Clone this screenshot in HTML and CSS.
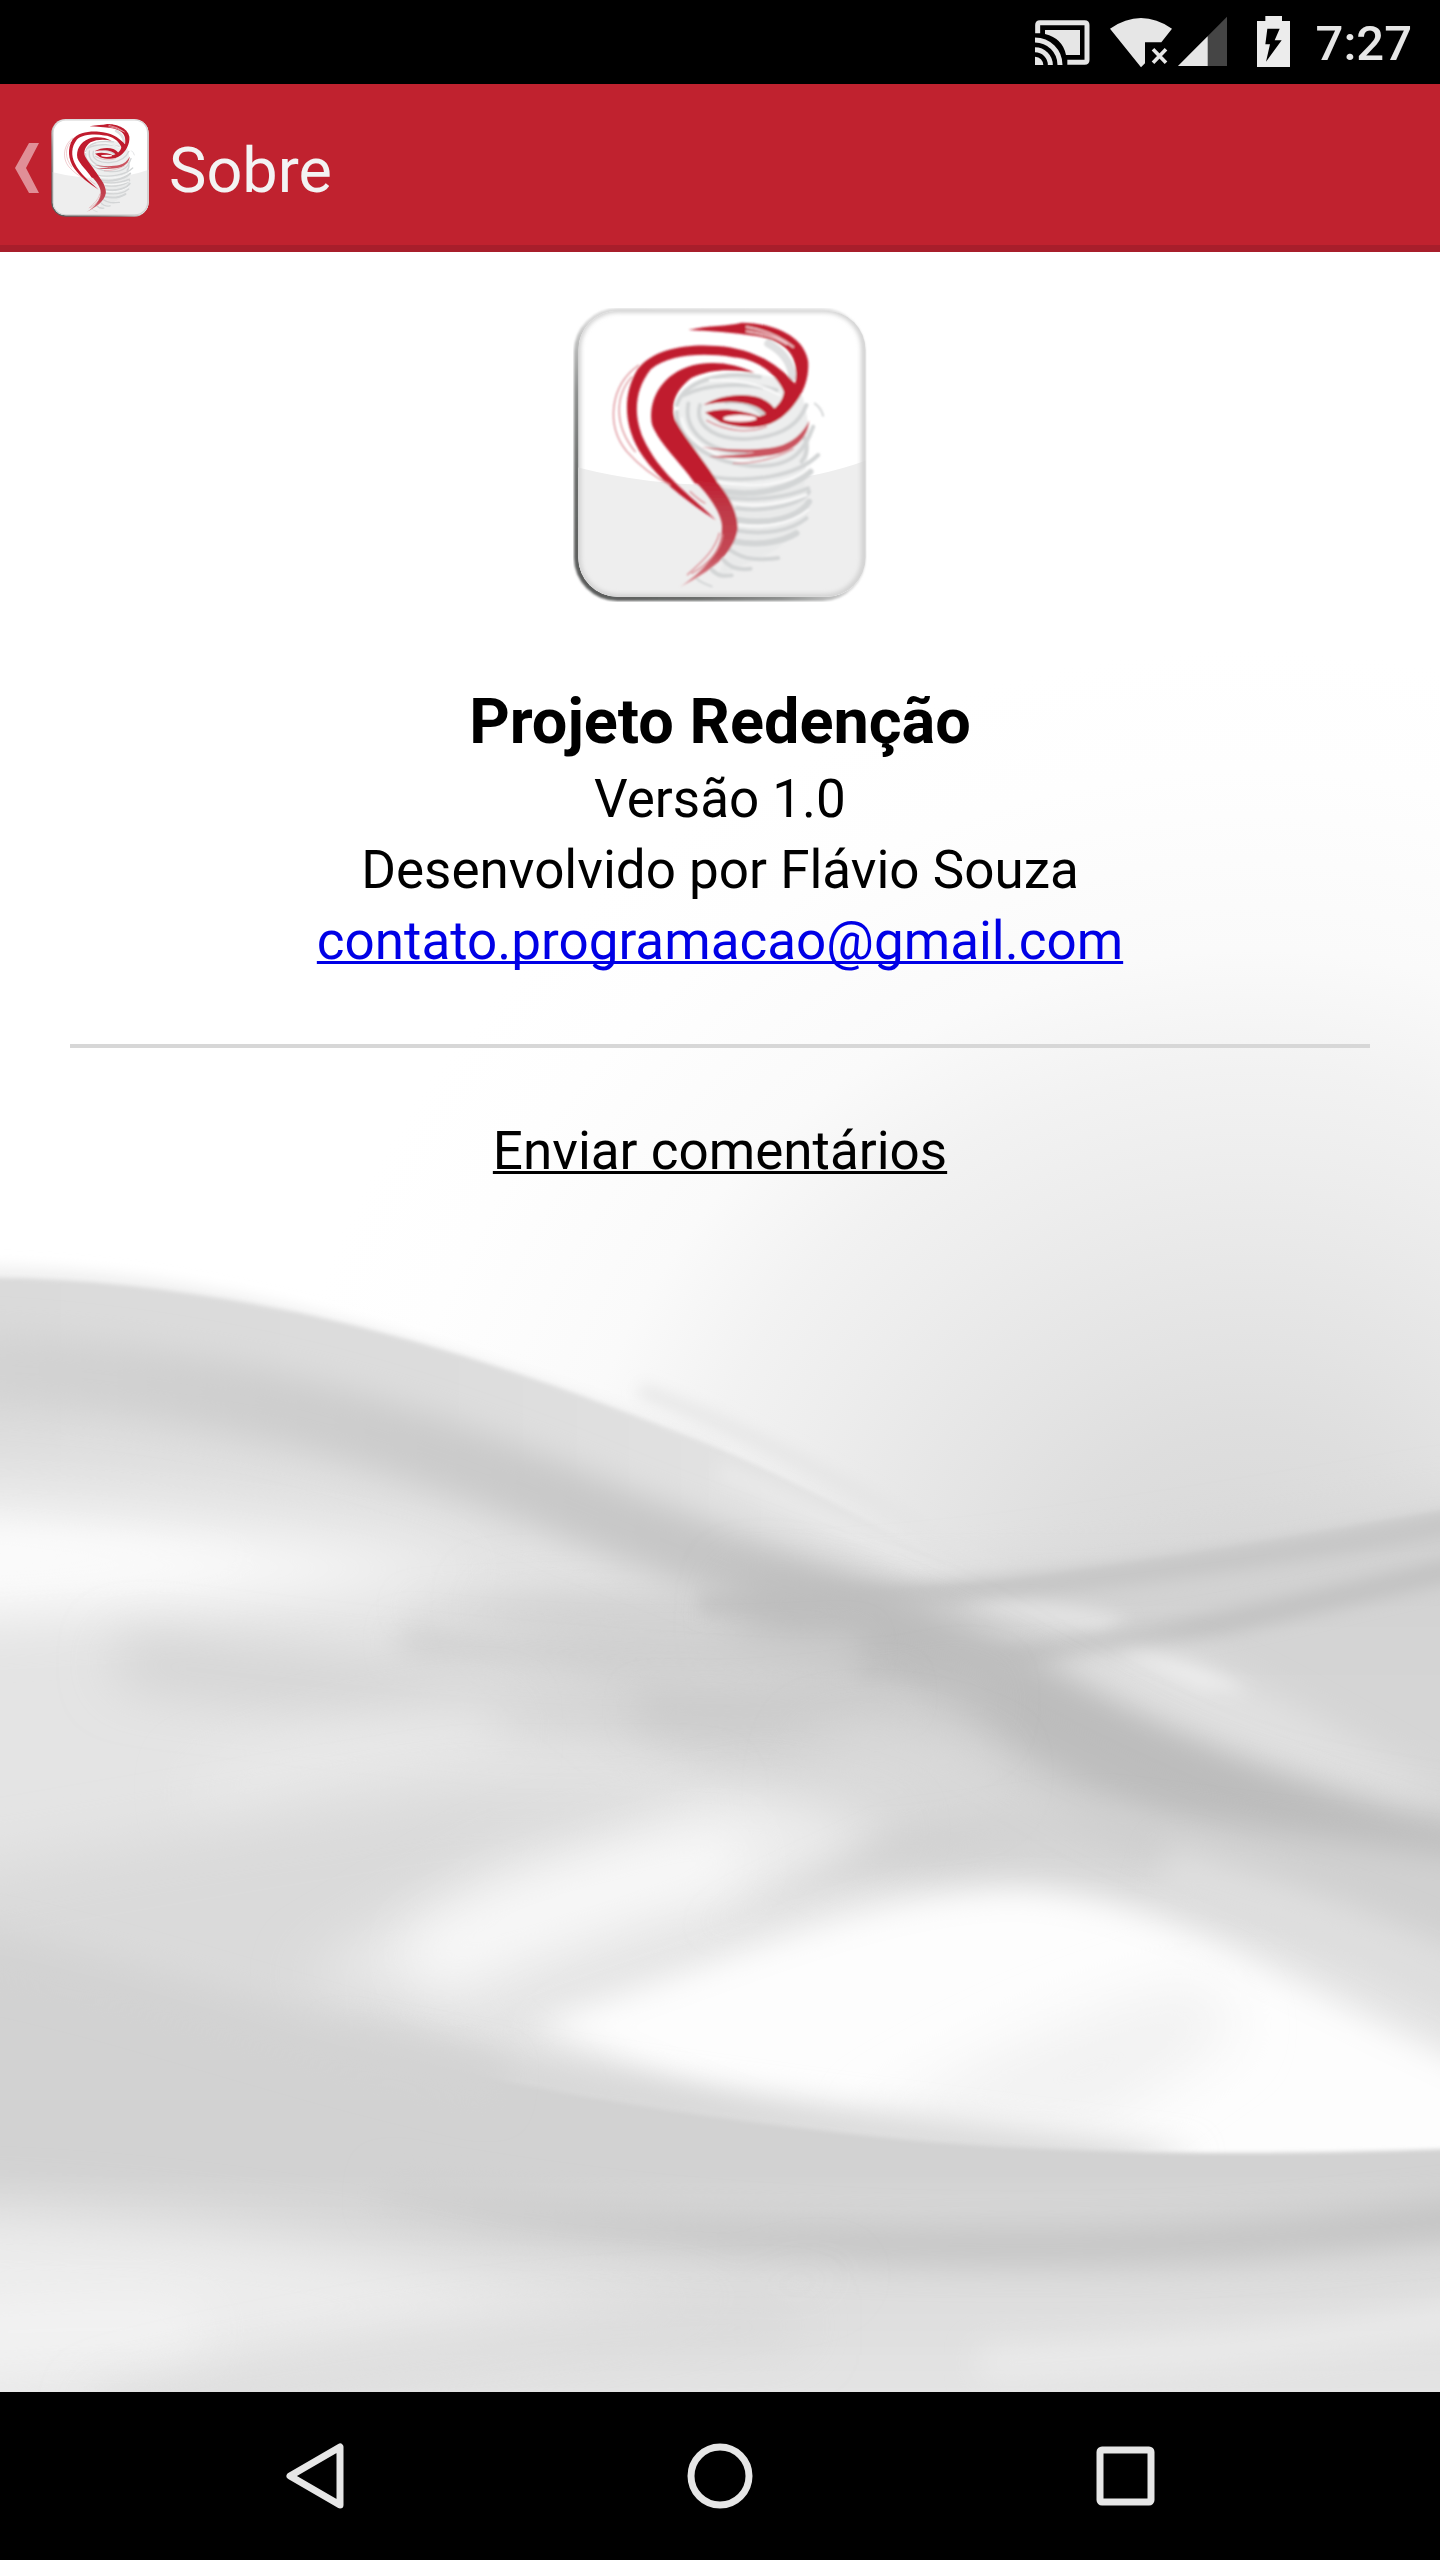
FILE: index.html
```html
<!DOCTYPE html>
<html lang="pt-BR">
<head>
<meta charset="utf-8">
<meta name="viewport" content="width=device-width, initial-scale=1">
<title>Sobre</title>
<link rel="stylesheet" href="styles.css">
</head>
<body>
<svg class="defs" aria-hidden="true">
  <defs>
    <linearGradient id="rim" x1="0" y1="1" x2="1" y2="0">
      <stop offset="0" stop-color="#555756"/><stop offset="0.22" stop-color="#6c6e6d"/><stop offset="0.36" stop-color="#8f9190"/><stop offset="0.5" stop-color="#d8d8d8"/><stop offset="1" stop-color="#e2e2e2"/>
    </linearGradient>
    <linearGradient id="tail" gradientUnits="userSpaceOnUse" x1="0" y1="540" x2="0" y2="880">
      <stop offset="0" stop-color="#c01b2d"/><stop offset="0.3" stop-color="#bf3947"/><stop offset="0.7" stop-color="#c54956"/><stop offset="1" stop-color="#dc8d94"/>
    </linearGradient>
    <clipPath id="tile"><rect x="54" y="46" width="864" height="860" rx="118"/></clipPath>
    <filter id="soft" x="-10%" y="-10%" width="120%" height="120%"><feGaussianBlur stdDeviation="3"/></filter>
    <filter id="edge" x="-10%" y="-10%" width="120%" height="120%"><feGaussianBlur stdDeviation="6"/></filter>
  </defs>
  <symbol id="logo" viewBox="40 38 880 884">
    <rect x="41" y="39" width="877" height="880" rx="130" fill="url(#rim)" filter="url(#soft)"/>
    <g clip-path="url(#tile)">
      <rect x="54" y="46" width="864" height="860" fill="#fff"/>
      <path d="M40 514Q260 572 500 570Q740 562 920 496V920H40Z" fill="#eee"/>
      <rect x="52" y="42" width="862" height="866" rx="120" fill="none" stroke="#d2d2d2" stroke-width="20" filter="url(#edge)"/>
    </g>
    <g filter="url(#soft)" fill="none" stroke-linecap="round">
      <path d="M380 280Q430 225 570 235T730 310Q760 430 742 500T750 650Q690 740 640 770L470 850L530 720Q530 640 450 540L360 410Q340 330 380 280Z" fill="#e9eaea" opacity=".8"/>
      <g stroke="#d3d5d6" stroke-width="12">
        <path d="M350 330C370 260 480 225 600 245"/><path d="M370 300C440 265 560 260 650 285"/>
        <path d="M420 330C400 400 480 440 580 430S720 380 740 330"/><path d="M385 325C370 400 430 470 560 475"/>
        <path d="M350 350C345 420 430 500 570 512S740 450 760 395"/><path d="M450 545C570 565 710 545 775 480"/>
        <path d="M470 585C580 612 700 580 752 530" stroke-width="18"/><path d="M500 608C590 620 690 605 745 580"/>
        <path d="M530 640C620 655 730 625 748 590"/><path d="M535 675C620 690 720 670 748 620" stroke-width="18"/>
        <path d="M535 708C610 720 690 710 740 670"/><path d="M525 740C600 755 670 740 710 715" stroke-width="18"/>
        <path d="M510 765C560 800 600 795 655 790"/><path d="M490 795C510 822 540 826 572 822"/>
        <path d="M455 825C475 845 490 845 515 842"/><path d="M410 852C425 865 440 870 455 875" stroke-width="6"/>
        <path d="M765 325Q785 340 790 362" stroke-width="6"/><path d="M735 430Q750 470 725 500"/>
        <path d="M625 145Q690 180 698 245" stroke-width="24" stroke="#dfe0e1"/>
        <path d="M500 318Q570 310 612 358" stroke-width="18" stroke="#d2d5d5"/>
      </g>
      <g stroke="#fafafa" stroke-width="7">
        <path d="M365 370C380 440 470 495 570 500"/><path d="M470 560C570 582 700 570 750 515"/>
        <path d="M520 625C600 640 690 620 740 600"/><path d="M535 690C610 700 690 690 745 645"/>
        <path d="M450 255C520 250 600 265 660 300"/>
      </g>
      <g fill="#c01b2d">
        <path d="M385 104C450 88 500 94 545 82C620 82 730 112 745 198C750 270 712 330 664 368C610 408 540 400 482 382L435 352C480 338 530 340 598 364C650 350 672 310 672 290C650 235 590 190 520 186C430 172 330 176 272 222C218 290 222 370 250 432C300 540 390 600 468 676C390 626 300 560 248 484C190 400 185 300 232 222C280 160 380 145 470 152C570 158 650 200 706 266C718 190 690 140 590 122C520 112 450 106 385 104Z"/>
        <path d="M585 234C520 200 440 195 380 216C300 245 262 320 276 390C300 450 360 500 404 565L462 580L480 575C445 510 380 440 345 375C330 330 345 285 395 248C450 220 520 220 585 234Z"/>
        <path d="M430 330C480 300 550 292 600 308Q640 325 650 352L625 365C600 325 530 308 430 330Z"/>
        <path d="M425 456C500 465 600 468 655 454Q720 435 748 376C745 430 700 475 620 482C560 492 500 490 445 485C520 480 570 478 585 472Q500 475 425 456Z" fill="#cb5560"/>
      </g>
      <path d="M400 555L475 565C520 620 535 670 533 705C520 780 450 830 358 878C430 830 486 770 486 700C490 660 440 590 400 555Z" fill="url(#tail)"/>
      <ellipse cx="540" cy="370" rx="50" ry="10" fill="#fbf3f3"/>
      <g stroke="#dc8d94" stroke-width="4">
        <path d="M235 210C150 270 135 390 200 470C240 515 280 545 330 570"/>
        <path d="M215 245C165 300 160 390 225 470"/>
        <path d="M478 715C465 770 420 805 382 840"/><path d="M395 836C440 810 480 770 488 720"/>
        <path d="M440 376C500 410 570 415 620 395"/><path d="M520 505C590 505 650 490 700 462"/>
        <path d="M390 590Q415 615 435 625"/>
      </g>
      <path d="M560 95Q640 108 700 155M560 108Q630 116 680 146" stroke="#eec3c7" stroke-width="6"/>
    </g>
  </symbol>
</svg>

<div class="screen">
  <div class="status-bar">
    <svg class="status-icon cast" viewBox="45 48 165 156" role="img" aria-label="Transmitindo">
      <path d="M53 100V75Q53 68 60 68H194Q201 68 201 75V180Q201 187 194 187H142" fill="none" stroke="#e6e6e6" stroke-width="15"/>
      <path d="M75 90H180V165H138Q128 115 75 102Z" fill="#e6e6e6"/>
      <path d="M45 170Q68 172 70 195H45Z" fill="#e6e6e6"/>
      <path d="M45 149A46 46 0 0 1 91 195M45 120A75 75 0 0 1 120 195" fill="none" stroke="#e6e6e6" stroke-width="15"/>
    </svg>
    <svg class="status-icon wifi" viewBox="270 48 186 156" role="img" aria-label="Wi-Fi sem conexão">
      <path d="M270 86Q363 22 456 86L424 127H375V190L363 202Z" fill="#e6e6e6"/>
      <path d="M399 148L438 188M438 148L399 188" stroke="#e6e6e6" stroke-width="11"/>
    </svg>
    <svg class="status-icon signal" viewBox="474 48 147 156" role="img" aria-label="Sinal">
      <path d="M621 50V198H474Z" fill="#454545"/><path d="M563 109V198H474Z" fill="#e6e6e6"/>
    </svg>
    <svg class="status-icon battery" viewBox="711 48 99 156" role="img" aria-label="Carregando">
      <path d="M736 48H786V63H810V201H711V63H736Z" fill="#ececec"/>
      <path d="M742 86H779L764 121H785L738 185L750 133H736Z" fill="#000"/>
    </svg>
    <time class="clock">7:27</time>
  </div>

  <header class="action-bar">
    <a class="up" href="#" aria-label="Voltar">
      <svg class="chevron" viewBox="0 0 24 50" aria-hidden="true"><path d="M14 0H24L11 25L24 50H14L0 25Z" fill="#e08f97"/></svg>
      <svg class="app-icon" aria-hidden="true"><use href="#logo"/></svg>
    </a>
    <h1 class="heading">Sobre</h1>
  </header>

  <main class="about">
    <svg class="waves" viewBox="0 252 1440 2140" preserveAspectRatio="none" aria-hidden="true">
      <defs>
        <radialGradient id="haze" gradientUnits="userSpaceOnUse" cx="1250" cy="1650" r="1000">
          <stop offset="0.1" stop-color="#d9d9d9"/><stop offset="0.22" stop-color="#dedede"/><stop offset="0.32" stop-color="#e4e4e4"/><stop offset="0.48" stop-color="#ededed"/><stop offset="0.58" stop-color="#f2f2f2"/><stop offset="0.7" stop-color="#fafafa"/><stop offset="0.88" stop-color="#fefefe"/><stop offset="1" stop-color="#fff"/>
        </radialGradient>
        <linearGradient id="crest" gradientUnits="userSpaceOnUse" x1="0" y1="0" x2="1060" y2="0">
          <stop offset="0" stop-color="#dadada"/><stop offset="0.45" stop-color="#dddddd"/><stop offset="0.75" stop-color="#e3e3e3"/><stop offset="1" stop-color="#e2e2e2"/>
        </linearGradient>
        <linearGradient id="fold" gradientUnits="userSpaceOnUse" x1="0" y1="0" x2="1440" y2="0">
          <stop offset="0" stop-color="#d3d3d3"/><stop offset="0.3" stop-color="#cbcbcb"/><stop offset="0.5" stop-color="#c5c5c5"/><stop offset="0.62" stop-color="#bebebe"/><stop offset="1" stop-color="#bcbcbc"/>
        </linearGradient>
        <linearGradient id="floor" gradientUnits="userSpaceOnUse" x1="0" y1="2070" x2="0" y2="2400">
          <stop offset="0" stop-color="#d2d2d2"/><stop offset="0.3" stop-color="#d2d2d2"/><stop offset="0.65" stop-color="#dddddd"/><stop offset="1" stop-color="#e4e4e4"/>
        </linearGradient>
        <linearGradient id="right" gradientUnits="userSpaceOnUse" x1="0" y1="1520" x2="0" y2="1800">
          <stop offset="0" stop-color="#d1d1d1"/><stop offset="1" stop-color="#d7d7d7"/>
        </linearGradient>
        <linearGradient id="ridge" gradientUnits="userSpaceOnUse" x1="300" y1="0" x2="1440" y2="0">
          <stop offset="0" stop-color="#d3d3d3"/><stop offset="0.5" stop-color="#c5c5c5"/><stop offset="1" stop-color="#c2c2c2"/>
        </linearGradient>
        <filter id="b2" filterUnits="userSpaceOnUse" x="-200" y="1000" width="1840" height="1600"><feGaussianBlur stdDeviation="2"/></filter>
        <filter id="b8" filterUnits="userSpaceOnUse" x="-200" y="1000" width="1840" height="1600"><feGaussianBlur stdDeviation="8"/></filter>
        <filter id="b16" filterUnits="userSpaceOnUse" x="-200" y="1000" width="1840" height="1600"><feGaussianBlur stdDeviation="16"/></filter>
        <filter id="b28" filterUnits="userSpaceOnUse" x="-200" y="1000" width="1840" height="1600"><feGaussianBlur stdDeviation="28"/></filter>
      </defs>
      <rect y="252" width="1440" height="2140" fill="url(#haze)"/>
      <path d="M-60 1276C180 1270 400 1335 720 1455" fill="none" stroke="#ececec" stroke-width="16" filter="url(#b8)"/>

      <path d="M-60 1278C60 1274 180 1288 300 1313C460 1348 580 1394 720 1449C830 1496 900 1540 1010 1600L1440 1810V2600H-60Z" fill="url(#crest)" filter="url(#b2)"/>
      <path d="M640 1390C800 1450 960 1550 1010 1580" fill="none" stroke="#e4e4e4" stroke-width="12" filter="url(#b8)"/>
      <path d="M720 1470C850 1530 930 1570 990 1600" fill="none" stroke="#e9e9e9" stroke-width="18" filter="url(#b8)"/>

      <path d="M-80 1450C250 1440 500 1530 720 1600H1500V2600H-80Z" fill="#e4e4e4" filter="url(#b28)"/>
      <path d="M-100 1508Q100 1510 480 1570Q200 1610-100 1620Z" fill="#fbfbfb" filter="url(#b28)"/>
      <path d="M-100 1530Q60 1534 260 1560Q60 1576-100 1580Z" fill="#fafafa" filter="url(#b16)"/>

      <path d="M480 1600H720C950 1592 1100 1572 1480 1505V1900H960C700 1820 600 1680 480 1600Z" fill="#d6d6d6" filter="url(#b28)"/>
      <path d="M400 1606Q560 1596 900 1594V1650Q620 1650 400 1606Z" fill="#d2d2d2" filter="url(#b16)"/>
      <path d="M720 1593C900 1590 1000 1584 1060 1573C1200 1553 1330 1530 1460 1508V1870L1180 1780L880 1640Z" fill="url(#right)" filter="url(#b2)"/>
      <path d="M700 1604C960 1600 1150 1577 1460 1523" fill="none" stroke="#c6c6c6" stroke-width="22" filter="url(#b8)"/>
      <path d="M960 1606Q1060 1596 1130 1620L1100 1636Z" fill="#e2e2e2" filter="url(#b8)"/>
      <path d="M860 1670C1060 1664 1220 1625 1460 1568" fill="none" stroke="#c3c3c3" stroke-width="24" filter="url(#b8)"/>
      <path d="M1040 1670Q1140 1636 1200 1660T1460 1800L1400 1825L1140 1740Z" fill="#e0e0e0" filter="url(#b16)"/>
      <path d="M1120 1654Q1190 1656 1250 1692L1200 1690Z" fill="#ececec" filter="url(#b8)"/>

      <path d="M-60 1366C200 1372 400 1430 620 1524L850 1612C1010 1680 1180 1800 1500 1884" fill="none" stroke="url(#fold)" stroke-width="68" filter="url(#b16)"/>
      <path d="M740 1612C880 1625 960 1680 1080 1750S1300 1840 1500 1870" fill="none" stroke="#bcbcbc" stroke-width="64" filter="url(#b28)"/>
      <path d="M400 1640Q600 1665 860 1650" fill="none" stroke="#cdcdcd" stroke-width="26" filter="url(#b16)"/>
      <path d="M120 1660Q420 1700 700 1718T960 1690" fill="none" stroke="#cccccc" stroke-width="36" filter="url(#b28)"/>
      <path d="M640 1708Q780 1716 900 1690" fill="none" stroke="#cacaca" stroke-width="26" filter="url(#b16)"/>
      <path d="M820 1740Q900 1720 1000 1770L960 1800H800Z" fill="#dadada" filter="url(#b28)"/>
      <path d="M200 1800Q360 1736 500 1730" fill="none" stroke="#ebebeb" stroke-width="40" filter="url(#b28)"/>

      <path d="M-80 1880Q140 1840 460 1790H720L400 1990L560 2110L-80 2200Z" fill="#dadada" filter="url(#b28)"/>
      <path d="M300 1980L500 1860L760 1790L900 1830L700 1920L460 2000Z" fill="#ededed" filter="url(#b28)"/>
      <path d="M420 1964Q600 1880 740 1856" fill="none" stroke="#fdfdfd" stroke-width="44" filter="url(#b28)"/>
      <path d="M700 1930Q880 1860 1050 1830Q1250 1870 1500 2010L1500 1860L1100 1810L900 1836Z" fill="#d0d0d0" filter="url(#b16)"/>
      <path d="M1160 1874Q1320 1920 1500 2000" fill="none" stroke="#dedede" stroke-width="60" filter="url(#b16)"/>

      <path d="M530 2024C720 1965 860 1892 1010 1888C1150 1890 1280 1980 1500 2080V2190H1100C800 2150 700 2090 530 2024Z" fill="#fdfdfd" filter="url(#b16)"/>
      <path d="M860 2130Q1030 2020 1200 1980L1240 2030L1100 2130Z" fill="#f2f2f2" filter="url(#b28)"/>
      <path d="M330 2030C560 2070 820 2110 1200 2154L1100 2180L380 2080Z" fill="#d6d6d6" filter="url(#b16)"/>
      <path d="M-60 1944C130 1975 280 2040 430 2066C620 2106 740 2122 900 2139C1060 2154 1250 2157 1500 2147V2500H-60Z" fill="url(#floor)" filter="url(#b2)"/>
      <path d="M-60 1944C130 1975 280 2040 500 2086" fill="none" stroke="#d3d3d3" stroke-width="44" filter="url(#b16)"/>
      <path d="M380 2190C640 2240 900 2250 1100 2246S1360 2226 1500 2216" fill="none" stroke="url(#ridge)" stroke-width="36" filter="url(#b16)"/>
      <path d="M-100 2210Q200 2215 440 2270T860 2270L500 2340L-100 2420Z" fill="#ececec" filter="url(#b28)"/>
      <path d="M-60 2336Q80 2326 200 2330" fill="none" stroke="#f6f6f6" stroke-width="40" filter="url(#b28)"/>
      <path d="M100 2420Q420 2335 800 2325" fill="none" stroke="#d7d7d7" stroke-width="30" filter="url(#b28)"/>
      <path d="M980 2364Q1300 2350 1500 2310" fill="none" stroke="#ededed" stroke-width="26" filter="url(#b16)"/>
    </svg>

    <section class="content">
      <svg class="logo" role="img" aria-label="Projeto Redenção"><use href="#logo"/></svg>
      <h2 class="app-name">Projeto Redenção</h2>
      <p class="line">Versão 1.0</p>
      <p class="line">Desenvolvido por Flávio Souza</p>
      <p class="line"><a class="mail" href="mailto:contato.programacao@gmail.com">contato.programacao@gmail.com</a></p>
      <hr class="rule">
      <p class="line"><a class="feedback" href="#">Enviar comentários</a></p>
    </section>
  </main>

  <nav class="nav-bar" aria-label="Sistema">
    <button class="nav-button" type="button" aria-label="Voltar"><svg class="nav-icon" viewBox="0 0 66 66"><path d="M58 4V62L8 33Z" fill="none" stroke="#e6e6e6" stroke-width="7" stroke-linejoin="round"/></svg></button>
    <button class="nav-button" type="button" aria-label="Início"><svg class="nav-icon" viewBox="0 0 66 66"><circle cx="33" cy="33" r="29" fill="none" stroke="#e6e6e6" stroke-width="7"/></svg></button>
    <button class="nav-button" type="button" aria-label="Recentes"><svg class="nav-icon" viewBox="0 0 66 66"><rect x="8" y="7" width="51" height="52" rx="2" fill="none" stroke="#e6e6e6" stroke-width="7"/></svg></button>
  </nav>
</div>
</body>
</html>
```
FILE: styles.css
```css
* {
  box-sizing: border-box;
}

body {
  margin: 0;
  background: #fff;
  color: #000;
  font-family: Roboto, "Liberation Sans", sans-serif;
}

.defs {
  position: absolute;
  width: 0;
  height: 0;
}

.screen {
  display: flex;
  flex-direction: column;
  min-height: 100vh;
}

.status-bar {
  display: flex;
  align-items: center;
  justify-content: flex-end;
  height: 84px;
  padding-right: 28px;
  background: #000;
}

.status-icon {
  height: 52px;
}

.cast {
  width: 55px;
  margin-right: 20px;
}

.wifi {
  width: 62px;
  margin-right: 6px;
}

.signal {
  width: 49px;
  margin-right: 30px;
}

.battery {
  width: 33px;
  margin-right: 26px;
}

.clock {
  padding-top: 4px;
  color: #e6e6e6;
  font-size: 49px;
  font-weight: 500;
  line-height: 56px;
}

.action-bar {
  display: flex;
  align-items: center;
  gap: 20px;
  height: 168px;
  padding-top: 7px;
  padding-left: 15px;
  background: #c0222f;
  border-bottom: 7px solid #a81e2b;
}

.up {
  display: flex;
  align-items: center;
  gap: 12px;
}

.chevron {
  width: 24px;
  height: 50px;
}

.app-icon {
  width: 98px;
  height: 98px;
}

.heading {
  margin: 0;
  padding-top: 5px;
  color: #f3f3f3;
  font-size: 63px;
  font-weight: 400;
  line-height: 74px;
}

.about {
  position: relative;
  flex: 1;
}

.waves {
  position: absolute;
  inset: 0;
  width: 100%;
  height: 100%;
}

.content {
  position: relative;
  padding: 56px 70px;
  text-align: center;
}

.logo {
  display: block;
  width: 294px;
  height: 294px;
  margin: 0 auto 80px;
}

.app-name {
  margin: 0 0 2px;
  font-size: 63px;
  font-weight: 700;
  line-height: 80px;
}

.line {
  margin: 0;
  font-size: 53px;
  line-height: 71px;
}

.mail,
.feedback {
  text-decoration: underline;
  text-decoration-thickness: 3px;
  text-decoration-skip-ink: none;
}

.mail {
  color: #0000e6;
}

.feedback {
  color: #000;
}

.rule {
  height: 4px;
  margin: 67px 0 68px;
  border: 0;
  background: #d7d7d7;
}

.nav-bar {
  display: grid;
  grid-template-columns: repeat(3, 1fr);
  height: 168px;
  padding: 0 112px;
  background: #000;
}

.nav-button {
  display: flex;
  align-items: center;
  justify-content: center;
  padding: 0;
  border: 0;
  background: none;
}

.nav-icon {
  width: 66px;
  height: 66px;
}
```
